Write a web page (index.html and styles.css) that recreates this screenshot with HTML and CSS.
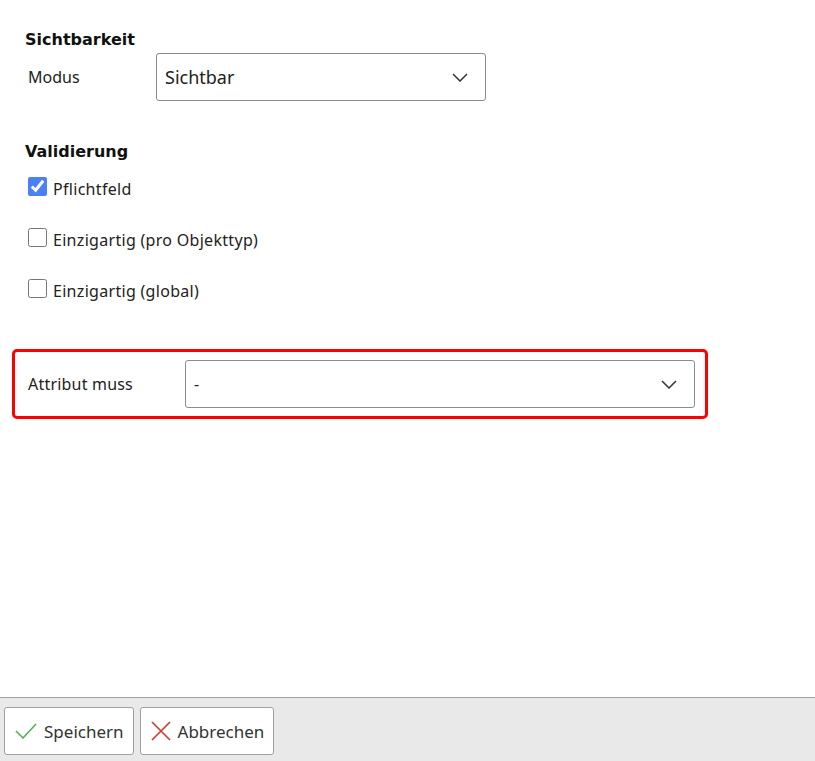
FILE: index.html
```html
<!DOCTYPE html>
<html lang="de">

<head>
    <meta charset="UTF-8">
    <meta name="viewport" content="width=device-width, initial-scale=1.0">
    <title>Attribut bearbeiten</title>
    <link rel="stylesheet" href="styles.css">
</head>

<body>
    <div class="page">
        <div class="content">
            <h3>Sichtbarkeit</h3>
            <div class="field">
                <label>Modus</label>
                <div class="select select--mode">
                    <span class="select__value">Sichtbar</span>
                    <svg class="chevron" width="16" height="9" viewBox="0 0 16 9">
                        <path d="M1 1 L8 8 L15 1" fill="none" stroke="#333" stroke-width="1.5" />
                    </svg>
                </div>
            </div>

            <h3 class="validation">Validierung</h3>
            <div class="check">
                <input type="checkbox" id="required" checked />
                <label for="required">Pflichtfeld</label>
            </div>
            <div class="check">
                <input type="checkbox" id="uniqueType" />
                <label for="uniqueType">Einzigartig (pro Objekttyp)</label>
            </div>
            <div class="check">
                <input type="checkbox" id="uniqueGlobal" />
                <label for="uniqueGlobal">Einzigartig (global)</label>
            </div>

            <div class="highlight">
                <label>Attribut muss</label>
                <div class="select select--attr">
                    <span class="select__value select__value--small">-</span>
                    <svg class="chevron" width="16" height="9" viewBox="0 0 16 9">
                        <path d="M1 1 L8 8 L15 1" fill="none" stroke="#333" stroke-width="1.5" />
                    </svg>
                </div>
            </div>
        </div>

        <div class="footer">
            <button class="btn">
                <svg width="22" height="16" viewBox="0 0 22 16">
                    <path d="M1 8 L8 15 L21 1" fill="none" stroke="#4caf50" stroke-width="1.5" />
                </svg>
                Speichern
            </button>
            <button class="btn">
                <svg width="20" height="20" viewBox="0 0 20 20">
                    <path d="M1 1 L19 19 M19 1 L1 19" fill="none" stroke="#d9342b" stroke-width="1.6" />
                </svg>
                Abbrechen
            </button>
        </div>
    </div>
</body>

</html>
```

FILE: styles.css
```css
* {
    box-sizing: border-box;
    padding: 0px;
    margin: 0px;
}

body {
    height: 100vh;
    width: 100vw;
    font-family: 'Noto Sans', 'Open Sans', sans-serif;
    font-size: 16px;
    color: #222;
    background-color: #ffffff;
    overflow: hidden;
}

.page {
    height: 100%;
    display: flex;
    flex-direction: column;
}

.content {
    flex: 1;
    padding: 29px 0 0 12px;
}

h3 {
    font-family: 'DejaVu Sans', 'Noto Sans', sans-serif;
    font-size: 16px;
    font-weight: bold;
    line-height: 22px;
    color: #111;
    margin-left: 13px;
}

.field {
    display: flex;
    align-items: center;
    margin-top: 2px;
}

.field label {
    width: 128px;
    padding-left: 16px;
    box-sizing: content-box;
}

.select {
    height: 48px;
    display: flex;
    align-items: center;
    justify-content: space-between;
    border: 1px solid #8c8c8c;
    border-radius: 3px;
    padding: 0 17px 0 8px;
    background: #fff;
}

.select--mode {
    width: 330px;
}

.select--attr {
    flex: 1;
}

.select__value {
    font-size: 18px;
    color: #222;
}

.select__value--small {
    font-size: 16px;
}

.validation {
    margin-top: 40px;
}

.check {
    display: flex;
    align-items: center;
    height: 24px;
    margin-left: 16px;
    margin-top: 27px;
}

.check label {
    letter-spacing: 0.3px;
}

.validation + .check {
    margin-top: 14px;
}

.check input {
    width: 19px;
    height: 19px;
    margin: 0 6px 0 0;
    accent-color: #4a80f5;
    position: relative;
    top: -3px;
}

.highlight {
    display: flex;
    align-items: center;
    margin-top: 46px;
    width: 696px;
    border: 3px solid #ff0000;
    border-radius: 5px;
    padding: 8px 10px 8px 13px;
}

.highlight label {
    width: 157px;
    letter-spacing: 0.2px;
}

.footer {
    height: 64px;
    border-top: 1px solid #a3a3a3;
    background-color: #e9e9e9;
    display: flex;
    align-items: flex-start;
    gap: 6px;
    padding: 9px 4px;
}

.btn {
    height: 48px;
    display: flex;
    align-items: center;
    gap: 7px;
    padding: 0 9px 0 10px;
    background-color: #ffffff;
    border: 1px solid #a0a0a0;
    border-radius: 3px;
    font-family: 'Noto Sans', 'Open Sans', sans-serif;
    font-size: 17px;
    color: #333;
    cursor: pointer;
}
```
